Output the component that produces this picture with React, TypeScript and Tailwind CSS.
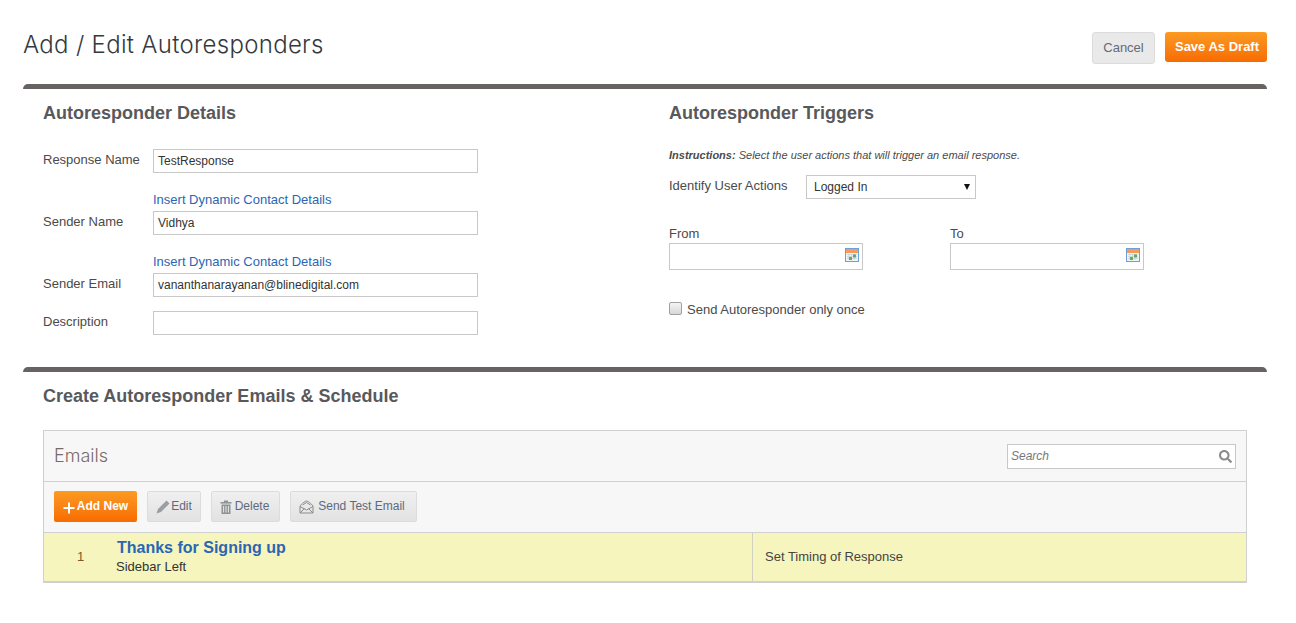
import React from 'react';
import { FaSearch } from 'react-icons/fa';

const CalendarIcon = () => (
  <svg width="14" height="14" viewBox="0 0 14 14" className="absolute right-[3px] top-[4px]">
    <rect x="0.5" y="0.500" width="13" height="13" fill="#eef4fb" stroke="#6f9fd8" />
    <rect x="1" y="1" width="12" height="4" fill="#f59a5a" />
    <path d="M2 6.500h10M2 8.500h10M2 10.500h10M4 6v6M6.500 6v6M9 6v6" stroke="#c5cdd6" strokeWidth="0.700" />
    <rect x="8" y="6.500" width="3" height="3" fill="#5fae5f" />
    <rect x="4" y="9" width="3" height="3" fill="#5fae5f" />
  </svg>
);

const PlusIcon = () => (
  <svg width="12" height="12" viewBox="0 0 12 12" className="mr-[2px] mt-[4px]">
    <path d="M6 0.500v11M0.500 6h11" stroke="#fff" strokeWidth="2" />
  </svg>
);

const PencilIcon = () => (
  <svg width="14" height="14" viewBox="0 0 14 14" className="mr-px mt-[3px]">
    <path d="M10.500 0.500l3 3L5 12 0.500 13.500 2 9z" fill="#9a9ea3" />
  </svg>
);

const TrashIcon = () => (
  <svg width="12" height="14" viewBox="0 0 12 14" className="mr-[3px] mt-[3px]">
    <rect x="0.500" y="2" width="11" height="1.600" fill="#8f9397" />
    <rect x="4" y="0.500" width="4" height="1.500" fill="#8f9397" />
    <path d="M1.500 4.500h9V14h-9z" fill="#8f9397" />
    <path d="M3.600 6v6.500M6 6v6.500M8.400 6v6.500" stroke="#e8e8e8" />
  </svg>
);

const EnvelopeIcon = () => (
  <svg width="15" height="14" viewBox="0 0 15 14" fill="none" stroke="#8b8b8b" className="mr-[4px] mt-[3px]">
    <path d="M1 6.500C1 5 6 1 7.500 1S14 5 14 6.500V13H1z" />
    <path d="M1 6.500l6.500 3.500L14 6.500M1 13l4.500-4.500M14 13L9.500 8.500" />
    <path d="M3.500 5L7.500 2.500 11.500 5" />
  </svg>
);

const Field = ({ label, value, link }: { label: string; value: string; link?: boolean }) => (
  <div className="flex">
    <label className="w-[110px] shrink-0 self-end pb-[4px] leading-[18px]">{label}</label>
    <div className="w-[325px]">
      {link && <a className="block h-[21px] leading-[20px] text-[#2a66b4]">Insert Dynamic Contact Details</a>}
      <div className="h-[24px] border border-[#c8c8c8] bg-white px-[4px] text-[12px] leading-[22px] text-[#333]">{value}</div>
    </div>
  </div>
);

const DateField = ({ label }: { label: string }) => (
  <div className="w-[194px]">
    <div className="h-[18px] leading-[18px]">{label}</div>
    <div className="relative h-[27px] border border-[#c8c8c8] bg-white">
      <CalendarIcon />
    </div>
  </div>
);

const grayButton = 'flex h-[31px] items-center justify-center rounded-[2px] border border-[#dcdcdc] bg-gradient-to-b from-[#f0f0f0] to-[#e2e2e2] pb-[2px] text-[12px] text-[#5d6a7e]';

export default function App() {
  return (
    <div className="min-h-[623px] bg-white pl-[23px] pr-[29px] font-['Liberation_Sans',Arial,sans-serif] text-[13px] text-[#4a4a4a]">
      {/* Header */}
      <div className="flex h-[84px] items-start justify-between">
        <h1 className="mt-[29px] font-['Inter',sans-serif] text-[24px] font-light leading-[32px] tracking-[0.3px] text-[#35393d]">
          Add / Edit Autoresponders
        </h1>
        <div className="mt-[32px] flex items-start gap-[10px]">
          <button className="h-[32px] w-[63px] rounded-[3px] border border-[#dcdcdc] bg-[#e9e9e9] text-[13px] text-[#636b78]">Cancel</button>
          <button className="h-[30px] w-[102px] rounded-[3px] bg-gradient-to-b from-[#fb9a22] to-[#f76b00] pl-[2px] text-[13px] font-bold text-white">Save As Draft</button>
        </div>
      </div>

      {/* Details and triggers */}
      <div className="flex h-[283px] rounded-t-[5px] border-t-[5px] border-[#676362] pl-[20px]">
        <div className="w-[626px]">
          <h2 className="mt-[13px] h-[22px] text-[18px] font-bold leading-[22px] text-[#58595b]">Autoresponder Details</h2>
          <div className="mt-[25px]">
            <Field label="Response Name" value="TestResponse" />
            <div className="mt-[17px]"><Field label="Sender Name" value="Vidhya" link /></div>
            <div className="mt-[17px]"><Field label="Sender Email" value="vananthanarayanan@blinedigital.com" link /></div>
            <div className="mt-[14px]"><Field label="Description" value="" /></div>
          </div>
        </div>
        <div className="flex-1">
          <h2 className="mt-[13px] h-[22px] text-[18px] font-bold leading-[22px] text-[#58595b]">Autoresponder Triggers</h2>
          <p className="mt-[24px] h-[14px] text-[11px] italic leading-[14px]">
            <b>Instructions:</b> Select the user actions that will trigger an email response.
          </p>
          <div className="mt-[13px] flex items-start">
            <span className="w-[137px] leading-[22px]">Identify User Actions</span>
            <div className="flex h-[24px] w-[170px] items-center justify-between border border-[#c8c8c8] pl-[7px] pr-[5px] text-[12px] text-[#333]">
              <span>Logged In</span>
              <span className="h-0 w-0 border-x-[3.5px] border-t-[6px] border-x-transparent border-t-[#111]" />
            </div>
          </div>
          <div className="mt-[26px] flex gap-[87px]">
            <DateField label="From" />
            <DateField label="To" />
          </div>
          <div className="mt-[32px] flex items-start">
            <span className="h-[13px] w-[13px] rounded-[2px] border border-[#a0a0a0] bg-gradient-to-b from-[#f4f4f4] to-[#d8d8d8]" />
            <span className="ml-[5px] leading-[16px]">Send Autoresponder only once</span>
          </div>
        </div>
      </div>

      {/* Emails */}
      <div className="rounded-t-[5px] border-t-[5px] border-[#676362] px-[20px]">
        <h2 className="mt-[13px] h-[22px] text-[18px] font-bold leading-[22px] text-[#58595b]">Create Autoresponder Emails &amp; Schedule</h2>
        <div className="mt-[23px] h-[153px] border border-b-2 border-[#d0d0d0]">
          <div className="flex h-[51px] items-center justify-between border-b border-[#d0d0d0] bg-[#f7f7f7] px-[10px]">
            <span className="mb-[2px] font-['Inter',sans-serif] text-[18px] font-light text-[#7a6a66]">Emails</span>
            <div className="mt-px flex h-[25px] w-[229px] items-center justify-between border border-[#c8c8c8] bg-white px-[3px]">
              <span className="mb-[2px] text-[12px] italic text-[#777]">Search</span>
              <FaSearch className="h-[13px] w-[13px] text-[#8a8a8a]" />
            </div>
          </div>
          <div className="flex h-[51px] items-start gap-[10px] border-b border-[#d0d0d0] bg-[#f7f7f7] pl-[10px] pt-[9px]">
            <button className="flex h-[31px] w-[83px] items-center justify-center rounded-[2px] bg-gradient-to-b from-[#fb9a22] to-[#f76b00] pb-[2px] text-[12px] font-bold text-white">
              <PlusIcon />Add New
            </button>
            <button className={`${grayButton} w-[54px]`}><PencilIcon />Edit</button>
            <button className={`${grayButton} w-[69px] pr-[2px]`}><TrashIcon />Delete</button>
            <button className={`${grayButton} w-[127px] pr-[3px]`}><EnvelopeIcon />Send Test Email</button>
          </div>
          <div className="flex h-[48px] bg-[#f5f5bd]">
            <div className="w-[72px] pl-[33px] pt-[15px] text-[13px] leading-[18px] text-[#7a5a2a]">1</div>
            <div className="w-[637px] border-r border-[#d0d0c0]">
              <div className="mt-[5px] h-[20px] pl-px text-[16px] font-bold leading-[20px] text-[#2a66b4]">Thanks for Signing up</div>
              <div className="text-[13px] leading-[18px] text-[#333]">Sidebar Left</div>
            </div>
            <div className="pl-[12px] pt-[15px] text-[13px] leading-[18px] text-[#444]">Set Timing of Response</div>
          </div>
        </div>
      </div>
    </div>
  );
}
